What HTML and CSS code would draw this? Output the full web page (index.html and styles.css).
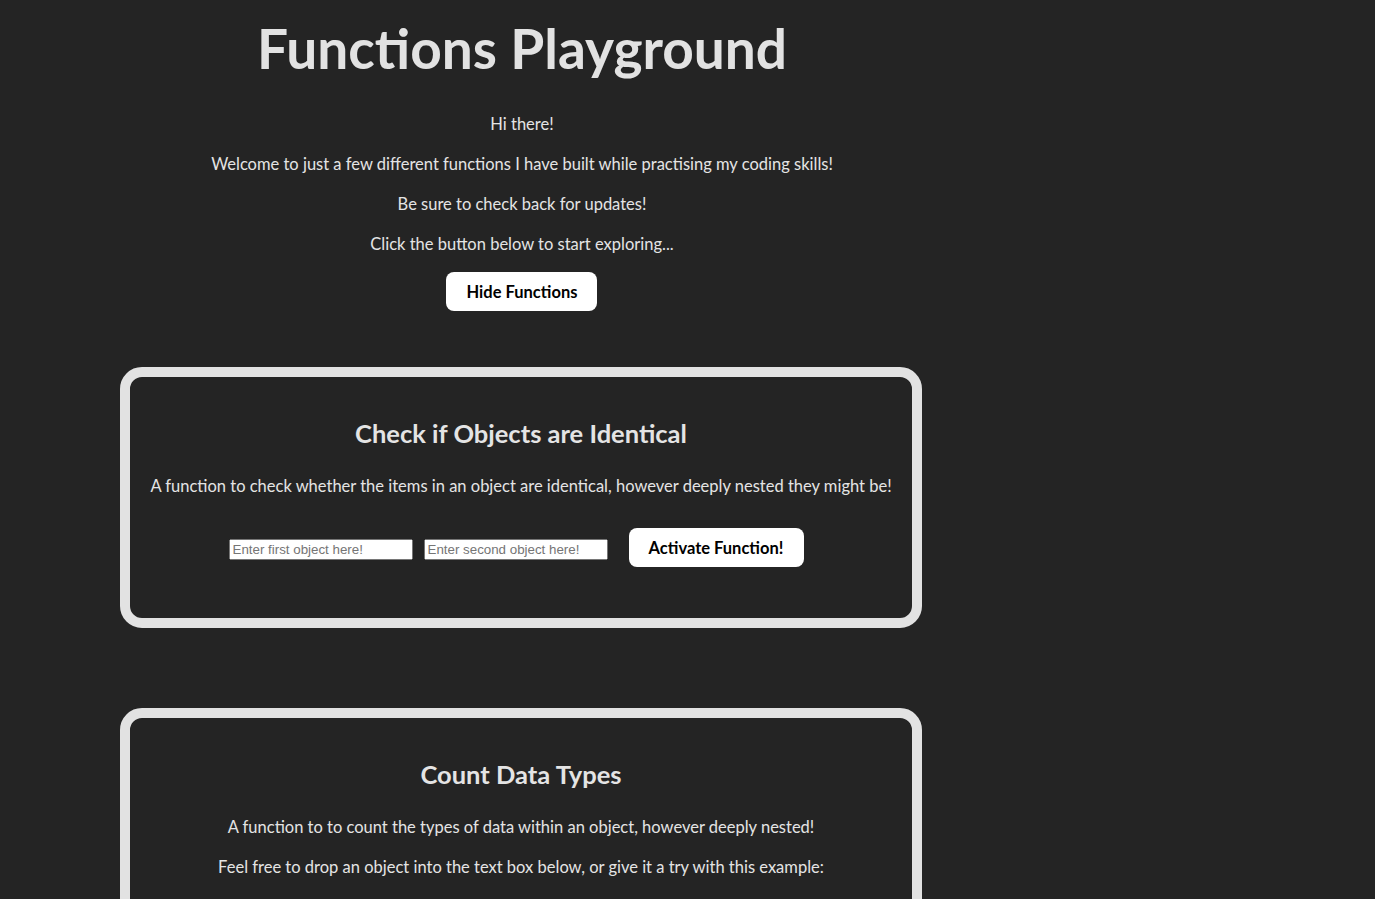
FILE: index.html
```html
<!DOCTYPE html>
<html lang="en">
<head>
<meta charset="utf-8">
<title>Functions Playground</title>
<link rel="stylesheet" href="styles.css">
</head>
<body>
<main class="page">
  <header class="intro">
    <h1 class="title">Functions Playground</h1>
    <p class="text">Hi there!</p>
    <p class="text">Welcome to just a few different functions I have built while practising my coding skills!</p>
    <p class="text">Be sure to check back for updates!</p>
    <p class="text">Click the button below to start exploring...</p>
    <button class="btn btn-hide" type="button">Hide Functions</button>
  </header>

  <section class="card">
    <h2 class="card-title">Check if Objects are Identical</h2>
    <p class="text">A function to check whether the items in an object are identical, however deeply nested they might be!</p>
    <div class="row">
      <input class="field field-first" type="text" placeholder="Enter first object here!">
      <input class="field field-second" type="text" placeholder="Enter second object here!">
      <button class="btn btn-activate" type="button">Activate Function!</button>
    </div>
  </section>

  <section class="card">
    <h2 class="card-title">Count Data Types</h2>
    <p class="text">A function to to count the types of data within an object, however deeply nested!</p>
    <p class="text">Feel free to drop an object into the text box below, or give it a try with this example:</p>
    <p class="text example">{ a: 1, b: "two", c: { d: true, e: [null, undefined, 3] } }</p>
  </section>
</main>
</body>
</html>
```

FILE: styles.css
```css
html, body {
  margin: 0;
  padding: 0;
  background: #242424;
}

body {
  font-family: Lato, "Open Sans", sans-serif;
  color: #e4e4e4;
  overflow: hidden;
  height: 899px;
}

.page {
  width: 1042px;
  display: flex;
  flex-direction: column;
  align-items: center;
}

.intro {
  display: flex;
  flex-direction: column;
  align-items: center;
  padding-top: 16px;
  padding-left: 2px;
}

.title {
  margin: 0 0 32px;
  font-size: 55px;
  line-height: 64px;
  font-weight: 700;
  color: #e2e2e2;
}

.text {
  margin: 0 0 16px;
  font-size: 16.5px;
  line-height: 24px;
  text-align: center;
}

.example {
  color: #8a8a8a;
}

.btn {
  background: #ffffff;
  color: #000000;
  border: none;
  border-radius: 8px;
  font-family: inherit;
  font-weight: 700;
  font-size: 16.5px;
  height: 39px;
  cursor: pointer;
}

.btn-hide {
  width: 151px;
}

.btn-activate {
  width: 175px;
}

.card {
  box-sizing: border-box;
  width: 802px;
  margin-top: 56px;
  margin-bottom: 25px;
  border: 10px solid #e2e2e2;
  border-radius: 22px;
  padding: 41px 10px 51px;
  display: flex;
  flex-direction: column;
  align-items: center;
}

.card + .card {
  margin-top: 55px;
}

.card-title {
  margin: 0 0 26px;
  font-size: 25.5px;
  line-height: 30px;
  font-weight: 700;
}

.row {
  display: flex;
  align-items: center;
  margin-top: 14px;
  padding-right: 10px;
}

.field {
  box-sizing: border-box;
  width: 184px;
  height: 21px;
  margin-top: 3px;
  font-family: "Liberation Sans", Arial, sans-serif;
  font-size: 13.33px;
}

.field-first {
  margin-right: 11px;
}

.field-second {
  margin-right: 21px;
}

.field::placeholder {
  color: #757575;
}
```
